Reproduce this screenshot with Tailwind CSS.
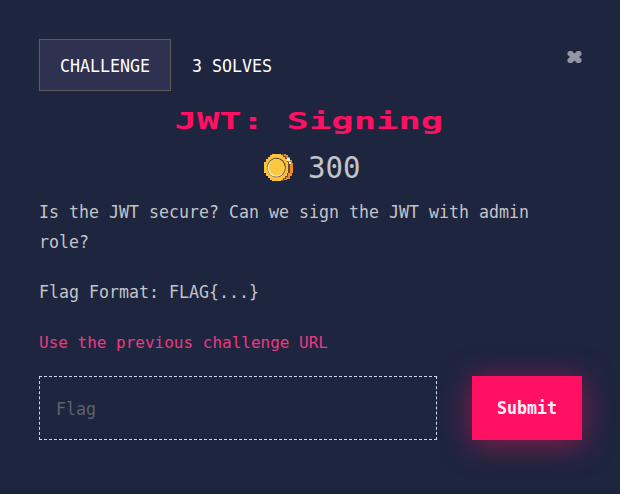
<!DOCTYPE html>
<html lang="en">
<head>
<meta charset="utf-8">
<title>JWT: Signing</title>
<script src="https://cdn.jsdelivr.net/npm/@tailwindcss/browser@4"></script>
</head>
<body class="bg-[#1e253f]">
<main class="w-[620px] h-[494px] overflow-hidden border-b-2 border-[#1b213b] px-[39px] pt-[39px] pr-[38px] text-[18px] leading-[30px] text-[#c3c4c8] font-['DejaVu_Sans_Mono',monospace]">
  <header class="flex h-[52px] text-white">
    <div class="w-[132px] border border-[#5b5c5f] bg-[#2e3150] pl-5 pt-[11px]">
      <span class="inline-block origin-left scale-x-[.9227] whitespace-nowrap">CHALLENGE</span>
    </div>
    <div class="pl-[21px] pt-3">
      <span class="inline-block origin-left scale-x-[.9227] whitespace-nowrap">3 SOLVES</span>
    </div>
    <button class="ml-auto mt-3 h-3 w-[15px]" aria-label="Close">
      <svg class="block" width="15" height="12" viewBox="0 0 15 12" fill="#9295a3"><path d="M2 0H5L7.5 2.5L10 0H13L14.5 1.5V4L12 6L14.5 8V10.5L13 12H10L7.5 9.5L5 12H2L.5 10.5V8L3 6L.5 4V1.5Z"/></svg>
    </button>
  </header>
  <h1 class="mt-[10px] h-10 text-center text-[23.5px] leading-10 font-bold text-[#ff1063]"><span class="inline-block -translate-x-0.5 scale-x-[1.583] whitespace-nowrap">JWT: Signing</span></h1>
  <div class="mt-[7px] flex h-10 pl-[225px]">
    <svg class="mt-1.5 shrink-0" width="29" height="27" viewBox="0 0 29 27">
      <path fill="#ed8926" d="M12 0H22V1H24V3H26V6H28V9H29V19H28V22H26V25H23V26H20V27H12Z"/>
      <path fill="#6b4a2e" d="M17 0H20V2H22V4H24V8H26V19H24V23H22V25H20V27H17Z"/>
      <path fill="#ffc03a" d="M8 0H17V1H19V3H21V5H23V8H24V19H23V22H21V24H19V26H17V27H8V26H6V24H4V22H2V19H0V8H2V5H4V3H6V1H8Z"/>
      <ellipse cx="12.5" cy="13.5" rx="9.3" ry="9.8" fill="#504331"/>
      <ellipse cx="12.2" cy="13.8" rx="8.6" ry="9" fill="#fff0c9"/>
      <ellipse cx="12.7" cy="13.4" rx="7.9" ry="8.3" fill="#ffc63f"/>
      <path fill="#fff2dc" d="M23 4h2v1h1v2h-3zM25 8h2v2h-2z"/>
    </svg>
    <span class="ml-[15px] origin-left scale-x-[.969] text-[30px] leading-10">300</span>
  </div>
  <div class="mt-[9px] whitespace-nowrap">
    <p class="h-[60px] origin-left scale-x-[.9227]">Is the JWT secure? Can we sign the JWT with admin<br>role?</p>
    <p class="mt-5 h-[30px] origin-left scale-x-[.9227]">Flag Format: FLAG{...}</p>
    <p class="mt-[21px] h-[30px] text-[16px] text-[#ea3a83]">Use the previous challenge URL</p>
  </div>
  <form class="mt-[18px] flex h-16 justify-between">
    <div class="w-[398px] border border-dashed border-[#cfd8e6] pl-4 pt-[17px] text-[#5d636c]">
      <span class="inline-block origin-left scale-x-[.9227]">Flag</span>
    </div>
    <button type="button" class="w-[110px] bg-[#ff1063] pl-[25px] text-left font-bold text-[#fff0f7] shadow-[0_4px_30px_rgba(255,16,99,.5)]"><span class="inline-block origin-left scale-x-[.9227]">Submit</span></button>
  </form>
</main>
</body>
</html>
